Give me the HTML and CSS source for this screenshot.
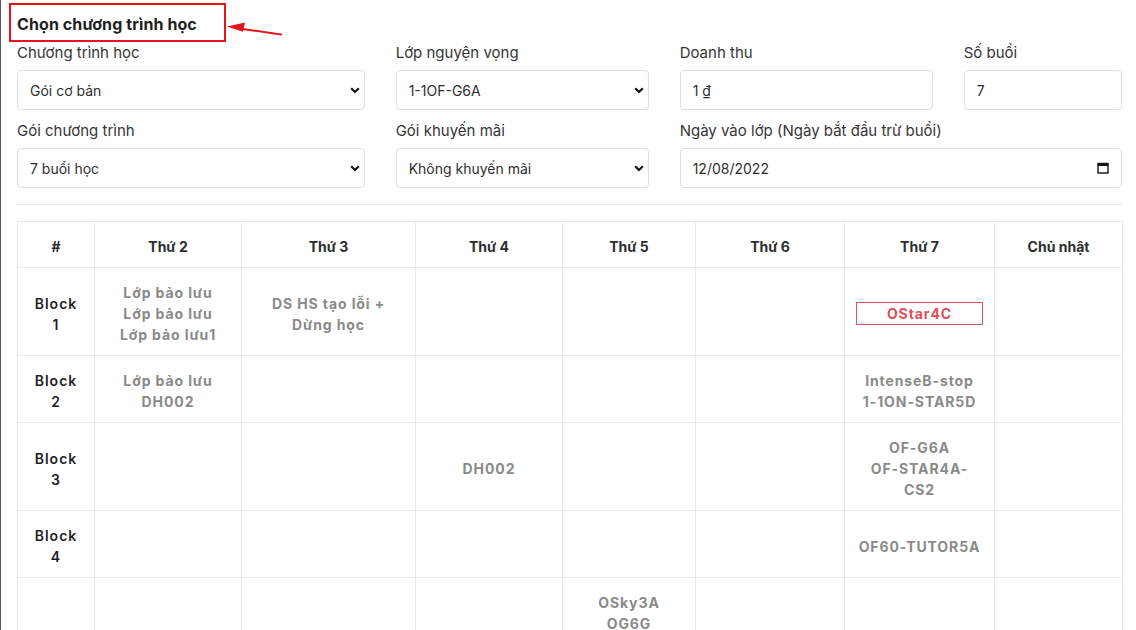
FILE: index.html
```html
<!DOCTYPE html>
<html lang="vi">
<head>
<meta charset="utf-8">
<title>Chọn chương trình học</title>
<link rel="stylesheet" href="styles.css">
</head>
<body>
<div class="page">
  <svg class="annot-arrow" width="300" height="50" viewBox="0 0 300 50" aria-hidden="true">
    <line x1="238" y1="28.3" x2="281" y2="34.5" stroke="#e8141c" stroke-width="2" stroke-linecap="round"/>
    <polygon points="227,26.5 245,22.5 243,31.8" fill="#e8141c"/>
  </svg>

  <h2 class="title">Chọn chương trình học</h2>

  <div class="form-grid">
    <div class="field">
      <label class="label">Chương trình học</label>
      <div class="control select">Gói cơ bản</div>
    </div>
    <div class="field">
      <label class="label">Lớp nguyện vọng</label>
      <div class="control select">1-1OF-G6A</div>
    </div>
    <div class="field">
      <label class="label">Doanh thu</label>
      <div class="control">1 ₫</div>
    </div>
    <div class="field">
      <label class="label">Số buổi</label>
      <div class="control">7</div>
    </div>

    <div class="field">
      <label class="label">Gói chương trình</label>
      <div class="control select">7 buổi học</div>
    </div>
    <div class="field">
      <label class="label">Gói khuyến mãi</label>
      <div class="control select">Không khuyến mãi</div>
    </div>
    <div class="field span-2">
      <label class="label">Ngày vào lớp (Ngày bắt đầu trừ buổi)</label>
      <div class="control date">
        <span>12/08/2022</span>
        <svg class="cal" width="12" height="12" viewBox="0 0 12 12" aria-hidden="true">
          <rect x="1" y="1.5" width="10" height="9.5" fill="none" stroke="#111" stroke-width="1.4"/>
          <rect x="1" y="1.5" width="10" height="2.5" fill="#111"/>
        </svg>
      </div>
    </div>
  </div>

  <hr class="sep">

  <table class="schedule">
    <colgroup>
      <col style="width:77px"><col style="width:147px"><col style="width:174px"><col style="width:147px">
      <col style="width:133px"><col style="width:149px"><col style="width:150px"><col style="width:128px">
    </colgroup>
    <thead>
      <tr>
        <th>#</th><th>Thứ 2</th><th>Thứ 3</th><th>Thứ 4</th><th>Thứ 5</th><th>Thứ 6</th><th>Thứ 7</th><th>Chủ nhật</th>
      </tr>
    </thead>
    <tbody>
      <tr>
        <td class="block">Block<br>1</td>
        <td><div class="cls">Lớp bảo lưu</div><div class="cls">Lớp bảo lưu</div><div class="cls">Lớp bảo lưu1</div></td>
        <td><div class="cls">DS HS tạo lỗi + Dừng học</div></td>
        <td></td><td></td><td></td>
        <td><div class="cls active">OStar4C</div></td>
        <td></td>
      </tr>
      <tr>
        <td class="block">Block<br>2</td>
        <td><div class="cls">Lớp bảo lưu</div><div class="cls">DH002</div></td>
        <td></td><td></td><td></td><td></td>
        <td><div class="cls">IntenseB-stop</div><div class="cls">1-1ON-STAR5D</div></td>
        <td></td>
      </tr>
      <tr>
        <td class="block">Block<br>3</td>
        <td></td><td></td>
        <td><div class="cls">DH002</div></td>
        <td></td><td></td>
        <td><div class="cls">OF-G6A</div><div class="cls">OF-STAR4A-CS2</div></td>
        <td></td>
      </tr>
      <tr>
        <td class="block">Block<br>4</td>
        <td></td><td></td><td></td><td></td><td></td>
        <td><div class="cls">OF60-TUTOR5A</div></td>
        <td></td>
      </tr>
      <tr>
        <td class="block">Block<br>5</td>
        <td></td><td></td><td></td>
        <td><div class="cls">OSky3A</div><div class="cls">OG6G</div><div class="cls">OF-G7B</div><div class="cls">OSky4C</div><div class="cls">OG8A</div><div class="cls">OF-G5C</div><div class="cls">OSky2B</div></td>
        <td></td><td></td><td></td>
      </tr>
    </tbody>
  </table>
</div>
</body>
</html>
```

FILE: styles.css
```css
* { box-sizing: border-box; }

html, body {
  margin: 0;
  padding: 0;
  background: #fff;
}

body {
  font-family: Inter, "Noto Sans", "DejaVu Sans", sans-serif;
  color: #333;
  border-left: 1px solid #5a5a5a;
  min-height: 630px;
}

.page {
  position: relative;
  padding: 3px 14px 0 16px;
}

.annot-arrow {
  position: absolute;
  left: -1px;
  top: 0;
}

.title {
  display: inline-block;
  margin: 0 0 0 -8px;
  padding: 1px 27px 0 6px;
  height: 39px;
  line-height: 37px;
  border: 2px solid #e8141c;
  font-size: 16px;
  font-weight: 700;
  color: #1e1e1e;
  letter-spacing: 0.1px;
}

.form-grid {
  display: grid;
  grid-template-columns:
    calc((100% + 31px) * 4 / 12 - 31px)
    calc((100% + 31px) * 3 / 12 - 31px)
    calc((100% + 31px) * 3 / 12 - 31px)
    calc((100% + 31px) * 2 / 12 - 31px);
  column-gap: 31px;
  row-gap: 11px;
  margin-top: 1px;
}

.field { display: flex; flex-direction: column; }
.span-2 { grid-column: span 2; }

.label {
  display: block;
  height: 20px;
  line-height: 20px;
  margin-bottom: 7px;
  font-size: 15px;
  color: #353535;
}

.control {
  height: 40px;
  border: 1px solid #dedee6;
  border-radius: 4px;
  padding: 0 12px;
  display: flex;
  align-items: center;
  font-size: 14px;
  color: #2f2f2f;
}

.select {
  background-image: url("data:image/svg+xml;utf8,<svg xmlns='http://www.w3.org/2000/svg' width='10' height='7' viewBox='0 0 10 7'><path d='M1.2 1.3 L5 5 L8.8 1.3' fill='none' stroke='%23111' stroke-width='2.2'/></svg>");
  background-repeat: no-repeat;
  background-position: right 4px center;
}

.date { justify-content: space-between; padding-right: 12px; }
.cal { display: block; }

.sep {
  border: 0;
  border-top: 1px solid #e6e6ee;
  margin: 16px 0 16px;
}

.schedule {
  width: 1105px;
  table-layout: fixed;
  border-collapse: collapse;
  margin-top: 1px;
}

.schedule th,
.schedule td {
  border: 1px solid #e8e8ef;
  text-align: center;
  vertical-align: middle;
  padding: 14px 11px 10px;
  line-height: 21px;
}

.schedule th {
  font-size: 14px;
  font-weight: 700;
  color: #2e2e2e;
}

.schedule td.block {
  font-size: 14px;
  font-weight: 600;
  color: #1f1f1f;
  letter-spacing: 1px;
}

.cls {
  font-size: 14px;
  font-weight: 700;
  color: #8a8a8a;
  letter-spacing: 0.9px;
}

.cls.active {
  color: #e0505b;
  border: 1px solid #d9525c;
  line-height: 21px;
}
```
